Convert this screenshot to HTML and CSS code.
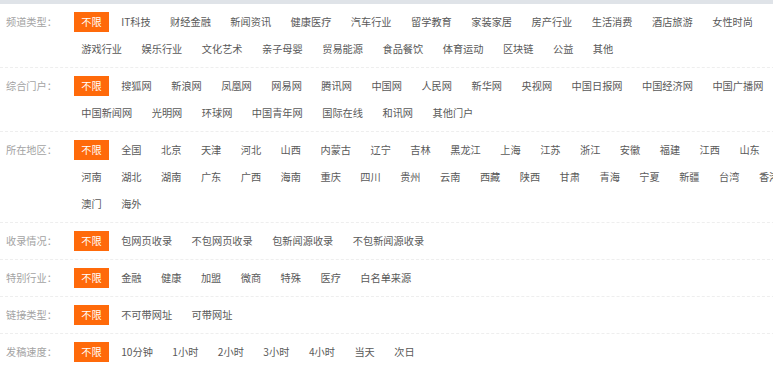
FILE: index.html
```html
<!DOCTYPE html>
<html lang="zh-CN">
<head>
<meta charset="utf-8">
<title>筛选</title>
<link rel="stylesheet" href="styles.css">
</head>
<body>
<div class="topbar"></div>
<div class="filters">
  <div class="row">
    <div class="label">频道类型：</div>
    <div class="items">
      <span class="item active">不限</span><span class="item">IT科技</span><span class="item">财经金融</span><span class="item">新闻资讯</span><span class="item">健康医疗</span><span class="item">汽车行业</span><span class="item">留学教育</span><span class="item">家装家居</span><span class="item">房产行业</span><span class="item">生活消费</span><span class="item">酒店旅游</span><span class="item">女性时尚</span><span class="item">游戏行业</span><span class="item">娱乐行业</span><span class="item">文化艺术</span><span class="item">亲子母婴</span><span class="item">贸易能源</span><span class="item">食品餐饮</span><span class="item">体育运动</span><span class="item">区块链</span><span class="item">公益</span><span class="item">其他</span>
    </div>
  </div>
  <div class="row">
    <div class="label">综合门户：</div>
    <div class="items">
      <span class="item active">不限</span><span class="item">搜狐网</span><span class="item">新浪网</span><span class="item">凤凰网</span><span class="item">网易网</span><span class="item">腾讯网</span><span class="item">中国网</span><span class="item">人民网</span><span class="item">新华网</span><span class="item">央视网</span><span class="item">中国日报网</span><span class="item">中国经济网</span><span class="item">中国广播网</span><span class="item">中国新闻网</span><span class="item">光明网</span><span class="item">环球网</span><span class="item">中国青年网</span><span class="item">国际在线</span><span class="item">和讯网</span><span class="item">其他门户</span>
    </div>
  </div>
  <div class="row">
    <div class="label">所在地区：</div>
    <div class="items">
      <span class="item active">不限</span><span class="item">全国</span><span class="item">北京</span><span class="item">天津</span><span class="item">河北</span><span class="item">山西</span><span class="item">内蒙古</span><span class="item">辽宁</span><span class="item">吉林</span><span class="item">黑龙江</span><span class="item">上海</span><span class="item">江苏</span><span class="item">浙江</span><span class="item">安徽</span><span class="item">福建</span><span class="item">江西</span><span class="item">山东</span><span class="item">河南</span><span class="item">湖北</span><span class="item">湖南</span><span class="item">广东</span><span class="item">广西</span><span class="item">海南</span><span class="item">重庆</span><span class="item">四川</span><span class="item">贵州</span><span class="item">云南</span><span class="item">西藏</span><span class="item">陕西</span><span class="item">甘肃</span><span class="item">青海</span><span class="item">宁夏</span><span class="item">新疆</span><span class="item">台湾</span><span class="item">香港</span><span class="item">澳门</span><span class="item">海外</span>
    </div>
  </div>
  <div class="row">
    <div class="label">收录情况：</div>
    <div class="items">
      <span class="item active">不限</span><span class="item">包网页收录</span><span class="item">不包网页收录</span><span class="item">包新闻源收录</span><span class="item">不包新闻源收录</span>
    </div>
  </div>
  <div class="row">
    <div class="label">特别行业：</div>
    <div class="items">
      <span class="item active">不限</span><span class="item">金融</span><span class="item">健康</span><span class="item">加盟</span><span class="item">微商</span><span class="item">特殊</span><span class="item">医疗</span><span class="item">白名单来源</span>
    </div>
  </div>
  <div class="row">
    <div class="label">链接类型：</div>
    <div class="items">
      <span class="item active">不限</span><span class="item">不可带网址</span><span class="item">可带网址</span>
    </div>
  </div>
  <div class="row last">
    <div class="label">发稿速度：</div>
    <div class="items">
      <span class="item active">不限</span><span class="item">10分钟</span><span class="item">1小时</span><span class="item">2小时</span><span class="item">3小时</span><span class="item">4小时</span><span class="item">当天</span><span class="item">次日</span>
    </div>
  </div>
</div>
</body>
</html>
```
FILE: styles.css
```css
html, body {
  margin: 0;
  padding: 0;
  overflow: hidden;
  background: #ffffff;
}
body {
  font-family: "Noto Sans CJK SC", "Microsoft YaHei", "Noto Sans", sans-serif;
  font-size: 10.2px;
  color: #555555;
}
.topbar {
  height: 4px;
  background: #dfe3e8;
}
.filters {
  width: 800px;
}
.row {
  display: flex;
  align-items: flex-start;
  padding: 8px 0;
  border-bottom: 1px dashed #eeeeee;
}
.row.last {
  border-bottom: none;
}
.label {
  flex: 0 0 74px;
  box-sizing: border-box;
  padding-left: 6px;
  line-height: 20px;
  color: #a3a3a3;
  white-space: nowrap;
}
.items {
  width: 720px;
  display: flex;
  flex-wrap: wrap;
  column-gap: 4.9px;
  row-gap: 7px;
}
.item {
  display: block;
  padding: 0 7.3px;
  line-height: 20px;
  height: 20px;
  white-space: nowrap;
  color: #595959;
}
.item.active {
  background: #ff6a0a;
  color: #ffffff;
}
```
